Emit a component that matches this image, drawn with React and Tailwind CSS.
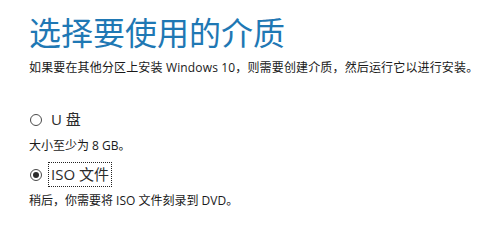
import React, { useState } from 'react';

const FONT = '"Segoe UI", "Open Sans", "Noto Sans CJK SC", sans-serif';

const options = [
    { id: 'usb', label: 'U 盘', note: '大小至少为 8 GB。' },
    { id: 'iso', label: 'ISO 文件', note: '稍后，你需要将 ISO 文件刻录到 DVD。' }
];

const Radio = ({ checked }) => (
    <span className="flex items-center justify-center w-[12px] h-[12px] rounded-full border border-[#4a4a4a] bg-white">
        {checked && <span className="w-[6px] h-[6px] rounded-full bg-[#2b2b2b]" />}
    </span>
);

const App = () => {
    const [selected, setSelected] = useState('iso');

    return (
        <div className="w-[502px] h-[248px] bg-white text-[#2b2b2b]" style={{ fontFamily: FONT }}>
            <div className="pl-[29px] pt-[15px]">
                {/* Header */}
                <h1 className="text-[32px] leading-[36px] text-[#1f78b4] font-normal">选择要使用的介质</h1>
                <p className="mt-[9px] text-[12px] leading-[16px] tracking-[0.15px] text-[#1a1a1a]">
                    如果要在其他分区上安装 Windows 10，则需要创建介质，然后运行它以进行安装。
                </p>

                {/* Options */}
                <div className="mt-[32px] flex flex-col">
                    {options.map((opt, i) => (
                        <div key={opt.id} className={i > 0 ? 'mt-[9px]' : ''}>
                            <button
                                onClick={() => setSelected(opt.id)}
                                className="flex items-center gap-[7px] pl-[1px]"
                            >
                                <Radio checked={selected === opt.id} />
                                <span
                                    className={`text-[15px] leading-[21px] py-[1px] px-[2px] ${selected === opt.id ? 'outline outline-1 outline-dotted outline-[#222]' : ''}`}
                                >
                                    {opt.label}
                                </span>
                            </button>
                            <p className="mt-[7px] text-[12px] leading-[16px] text-[#1a1a1a]">{opt.note}</p>
                        </div>
                    ))}
                </div>
            </div>
        </div>
    );
};

export default App;
